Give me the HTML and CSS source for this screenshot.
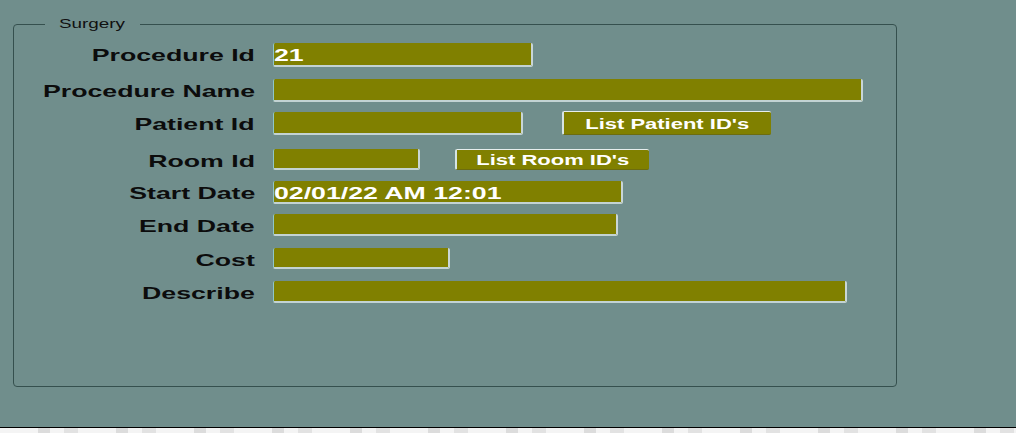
FILE: index.html
```html
<!DOCTYPE html>
<html>
<head>
<meta charset="utf-8">
<link rel="stylesheet" href="styles.css">
</head>
<body>
<div class="page">
  <fieldset class="panel">
    <legend class="panel-title"><span class="wide wide-left">Surgery</span></legend>
    <div class="form">
      <div class="row">
        <label class="label"><span class="wide">Procedure Id</span></label>
        <div class="field w-proc-id h24"><span class="wide wide-left">21</span></div>
      </div>
      <div class="row">
        <label class="label"><span class="wide">Procedure Name</span></label>
        <div class="field w-proc-name"></div>
      </div>
      <div class="row">
        <label class="label"><span class="wide">Patient Id</span></label>
        <div class="field w-patient"></div>
        <button class="btn btn-patient"><span class="wide wide-center">List Patient ID's</span></button>
      </div>
      <div class="row">
        <label class="label"><span class="wide">Room Id</span></label>
        <div class="field w-room h21"></div>
        <button class="btn btn-room"><span class="wide wide-center">List Room ID's</span></button>
      </div>
      <div class="row">
        <label class="label"><span class="wide">Start Date</span></label>
        <div class="field w-start"><span class="wide wide-left">02/01/22 AM 12:01</span></div>
      </div>
      <div class="row">
        <label class="label"><span class="wide">End Date</span></label>
        <div class="field w-end h22"></div>
      </div>
      <div class="row">
        <label class="label"><span class="wide">Cost</span></label>
        <div class="field w-cost h21"></div>
      </div>
      <div class="row">
        <label class="label"><span class="wide">Describe</span></label>
        <div class="field w-describe h22"></div>
      </div>
    </div>
  </fieldset>
</div>
<div class="footer"></div>
</body>
</html>
```

FILE: styles.css
```css
html, body {
  margin: 0;
  padding: 0;
}

body {
  width: 1016px;
  height: 433px;
  overflow: hidden;
  background: #708e8c;
  font-family: "Liberation Sans", Arial, sans-serif;
  color: #0c0c0c;
}

/* the original UI is rendered horizontally stretched */
.wide {
  display: inline-block;
  transform: scaleX(1.57);
  transform-origin: right center;
  white-space: nowrap;
}

.wide-left { transform-origin: left center; }
.wide-center { transform-origin: center center; }

.page {
  height: 427px;
  padding-top: 16px;
  box-sizing: border-box;
}

.panel {
  margin: 0 0 0 13px;
  width: 884px;
  height: 371px;
  box-sizing: border-box;
  border: 1px solid #35504e;
  border-radius: 4px;
  padding: 11px 0 0 0;
}

.panel-title {
  margin-left: 31px;
  padding: 0 39px 0 14px;
  font-size: 12px;
  line-height: 16px;
  color: #111;
}

.form {
  display: grid;
  grid-template-rows: 36px 33px 37px 32px 33px 34px 33px 23px;
}

.row {
  display: flex;
  align-items: flex-start;
  height: 23px;
}

.label {
  width: 241px;
  margin-right: 18px;
  text-align: right;
  font-size: 17px;
  font-weight: bold;
  line-height: 23px;
  padding-top: 1px;
}

.field {
  height: 23px;
  box-sizing: border-box;
  background: #808000;
  border-left: 1px solid #8fc6c8;
  border-right: 2px solid #c9d6d6;
  border-bottom: 2px solid #c3d3d3;
  border-radius: 2px;
  color: #fff;
  font-size: 17px;
  font-weight: bold;
  line-height: 21px;
  padding-top: 2px;
  white-space: nowrap;
}

.h24 { height: 24px; line-height: 22px; }
.h22 { height: 22px; }
.h21 { height: 21px; }

.w-proc-id { width: 260px; }
.w-proc-name { width: 590px; }
.w-patient { width: 250px; }
.w-room { width: 147px; }
.w-start { width: 350px; }
.w-end { width: 345px; }
.w-cost { width: 177px; }
.w-describe { width: 574px; }

.btn {
  box-sizing: border-box;
  background: #808000;
  color: #fff;
  font-family: "Liberation Sans", Arial, sans-serif;
  font-size: 14px;
  font-weight: bold;
  border: none;
  border-top: 1px solid #e6eeee;
  border-left: 2px solid #d6e4e4;
  border-bottom: 1px solid #6c6c10;
  border-radius: 2px;
  padding: 0;
  text-align: center;
}

.btn-patient {
  width: 209px;
  height: 24px;
  margin: -1px 0 0 39px;
  padding-top: 2px;
}

.btn-room {
  width: 194px;
  height: 21px;
  margin: 0 0 0 35px;
  line-height: 18px;
}

.footer {
  height: 6px;
  border-top: 1px solid #000;
  background:
    repeating-linear-gradient(90deg, #f4f4f4 0 38px, #dcdcdc 38px 50px, #f4f4f4 50px 64px, #e2e2e2 64px 78px);
}
```
